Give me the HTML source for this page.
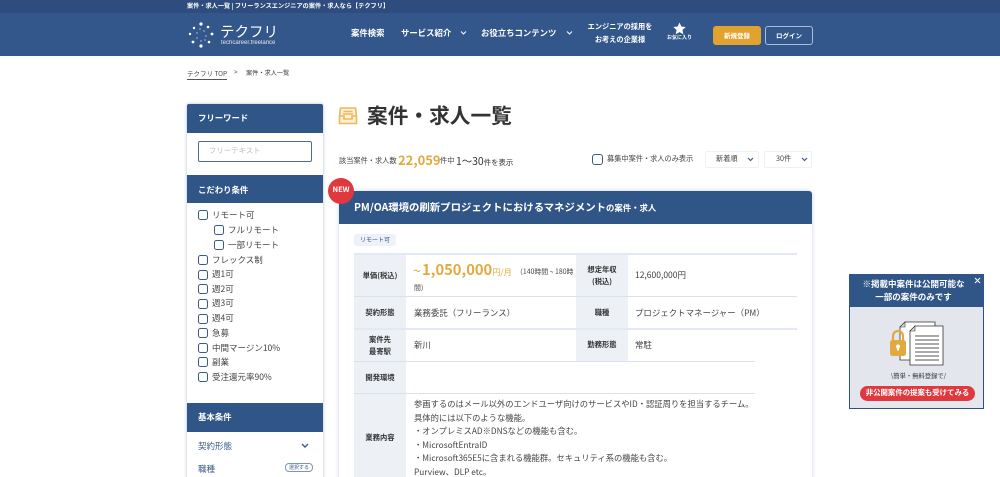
<!DOCTYPE html>
<html lang="ja"><head><meta charset="utf-8"><title>案件・求人一覧</title>
<style>
html,body{margin:0;padding:0;background:#fff;width:1000px;height:477px;overflow:hidden}
#p{width:1000px;height:477px;overflow:hidden;position:relative;font-family:"Liberation Sans","Noto Sans CJK JP",sans-serif;color:#333}
.a{position:absolute;white-space:nowrap;line-height:1}
.jp{font-family:"Noto Sans CJK JP",sans-serif}
.box{position:absolute;box-sizing:border-box}
.w{color:#fff}
.b{font-weight:700}
.cb{position:absolute;box-sizing:border-box;width:10px;height:10px;border:1.3px solid #3a5a8c;border-radius:2.5px;background:#fff}
.sb{font-family:"Noto Sans CJK JP",sans-serif;font-size:8.5px;color:#444;position:absolute;line-height:1;white-space:nowrap}
.lab{position:absolute;font-family:"Noto Sans CJK JP",sans-serif;font-size:7.3px;font-weight:700;color:#333;text-align:center;line-height:12px}
.val{position:absolute;font-family:"Noto Sans CJK JP",sans-serif;font-size:8.45px;color:#444;line-height:1;white-space:nowrap}
</style></head><body><div id="p">
<div class="box" style="left:0;top:0;width:1000px;height:13px;background:#2e4d7e"></div>
<div class="box" style="left:0;top:13px;width:1000px;height:43px;background:#33578b"></div>
<div class="a jp w b" style="left:187px;top:3px;font-size:6.150px;letter-spacing:.03px">案件・求人一覧 | フリーランスエンジニアの案件・求人なら【テクフリ】</div>

<svg class="box" style="left:187px;top:21px" width="30" height="28" viewBox="0 0 30 28" fill="#fff">
<circle cx="14" cy="3" r="1.600"/><circle cx="7" cy="7" r="1.200"/><circle cx="21" cy="6" r="1.300"/><circle cx="3" cy="13" r="1.200"/><circle cx="25" cy="13" r="1.400"/><circle cx="6" cy="21" r="1.400"/><circle cx="22" cy="21" r="1.300"/><circle cx="14" cy="25" r="1.600"/>
<circle cx="13" cy="8" r=".6"/><circle cx="17" cy="10" r=".6"/><circle cx="10" cy="12" r=".6"/><circle cx="19" cy="15" r=".6"/><circle cx="10" cy="17" r=".6"/><circle cx="14" cy="20" r=".6"/><circle cx="18" cy="19" r=".6"/></svg>
<div class="a jp w" style="left:220px;top:25px;font-size:14.500px">テクフリ</div>
<div class="a w" style="left:221px;top:40px;font-size:6px;opacity:.85">techcareer.freelance</div>

<div class="a jp w b" style="left:351px;top:29px;font-size:8.400px">案件検索</div>
<div class="a jp w b" style="left:401px;top:29px;font-size:8.400px">サービス紹介</div>
<svg class="box" style="left:460px;top:30px" width="7" height="6" viewBox="0 0 7 6"><path d="M1 1.500L3.500 4L6 1.500" fill="none" stroke="#fff" stroke-width="1"/></svg>
<div class="a jp w b" style="left:481px;top:29px;font-size:8.400px">お役立ちコンテンツ</div>
<svg class="box" style="left:566px;top:30px" width="7" height="6" viewBox="0 0 7 6"><path d="M1 1.500L3.500 4L6 1.500" fill="none" stroke="#fff" stroke-width="1"/></svg>
<div class="a jp w b" style="left:580px;top:21px;width:80px;text-align:center;font-size:7.200px;line-height:13px;white-space:normal">エンジニアの採用を<br>お考えの企業様</div>
<svg class="box" style="left:673px;top:22px" width="13" height="13" viewBox="0 0 24 24"><path d="M12 1l3.400 7.400 8 .9-6 5.400 1.700 8L12 18.600 4.900 22.700l1.700-8-6-5.400 8-.9z" fill="#fff"/></svg>
<div class="a jp w b" style="left:667px;top:35px;font-size:5px">お気に入り</div>
<div class="a jp w b" style="left:713px;top:26px;width:48px;height:19px;background:#e2a22e;border-radius:3px;text-align:center;line-height:18px;font-size:6.500px">新規登録</div>
<div class="a jp w b" style="left:765px;top:26px;width:48px;height:19px;box-sizing:border-box;border:1px solid #a9bdd8;border-radius:3px;text-align:center;line-height:16px;font-size:6.500px">ログイン</div>

<div class="a jp" style="left:187px;top:70px;font-size:6.500px;color:#444;border-bottom:1px solid #555;padding-bottom:2px">テクフリ TOP</div>
<div class="a" style="left:234px;top:70px;font-size:6px;color:#444">&gt;</div>
<div class="a jp" style="left:246px;top:70px;font-size:6.200px;color:#333">案件・求人一覧</div>

<!-- sidebar -->
<div class="box" style="left:187px;top:104px;width:136px;height:380px;background:#fff;box-shadow:0 0 3px rgba(60,90,140,.4);border-radius:2px 2px 0 0"></div>
<div class="box" style="left:187px;top:104px;width:136px;height:29px;background:#305587;border-radius:2px 2px 0 0"></div>
<div class="a jp w b" style="left:198px;top:114px;font-size:8.400px">フリーワード</div>
<div class="box" style="left:198px;top:141px;width:114px;height:21px;border:1px solid #4f6d9b;border-radius:2px;background:#fff"></div>
<div class="a jp" style="left:209px;top:147px;font-size:7.400px;color:#bbb">フリーテキスト</div>
<div class="box" style="left:187px;top:175px;width:136px;height:28px;background:#305587"></div>
<div class="a jp w b" style="left:198px;top:186px;font-size:8.400px">こだわり条件</div>

<div class="cb" style="left:198px;top:210px"></div><div class="sb" style="left:212px;top:211px">リモート可</div>
<div class="cb" style="left:214px;top:225px"></div><div class="sb" style="left:228px;top:226px">フルリモート</div>
<div class="cb" style="left:214px;top:240px"></div><div class="sb" style="left:228px;top:241px">一部リモート</div>
<div class="cb" style="left:198px;top:255px"></div><div class="sb" style="left:212px;top:256px">フレックス制</div>
<div class="cb" style="left:198px;top:270px"></div><div class="sb" style="left:212px;top:270px">週1可</div>
<div class="cb" style="left:198px;top:284px"></div><div class="sb" style="left:212px;top:285px">週2可</div>
<div class="cb" style="left:198px;top:299px"></div><div class="sb" style="left:212px;top:299px">週3可</div>
<div class="cb" style="left:198px;top:314px"></div><div class="sb" style="left:212px;top:314px">週4可</div>
<div class="cb" style="left:198px;top:328px"></div><div class="sb" style="left:212px;top:329px">急募</div>
<div class="cb" style="left:198px;top:343px"></div><div class="sb" style="left:212px;top:344px">中間マージン10%</div>
<div class="cb" style="left:198px;top:357px"></div><div class="sb" style="left:212px;top:358px">副業</div>
<div class="cb" style="left:198px;top:372px"></div><div class="sb" style="left:212px;top:373px">受注還元率90%</div>

<div class="box" style="left:187px;top:403px;width:136px;height:29px;background:#305587"></div>
<div class="a jp w b" style="left:198px;top:413px;font-size:8.400px">基本条件</div>
<div class="a jp" style="left:198px;top:442px;font-size:8.500px;color:#3a5a8c">契約形態</div>
<svg class="box" style="left:301px;top:443px" width="8" height="6" viewBox="0 0 8 6"><path d="M1 1l3 3 3-3" fill="none" stroke="#3a5a8c" stroke-width="1.400"/></svg>
<div class="a jp" style="left:198px;top:465px;font-size:8.500px;color:#3a5a8c">職種</div>
<div class="a jp" style="left:285px;top:463px;width:28px;height:9px;box-sizing:border-box;border:1px solid #7f95b8;border-radius:4px;font-size:5px;line-height:7px;text-align:center;color:#3a5a8c">選択する</div>

<!-- main heading -->
<svg class="box" style="left:338px;top:106px" width="20" height="20" viewBox="0 0 20 20" fill="none" stroke="#edb85c" stroke-width="1.600"><path d="M2.500 2h15l1 8v7.500h-17V10z" fill="#fdf0d6"/><path d="M1.500 10H6v3h8v-3h4.500"/><path d="M5.500 5.500h9M5 8h10"/></svg>
<div class="a jp b" style="left:367px;top:101px;font-size:20.700px;color:#333;line-height:26px">案件・求人一覧</div>
<div class="a jp" style="left:339px;top:158px;font-size:7.200px;color:#444">該当案件・求人数</div>
<div class="a jp b" style="left:398px;top:153px;font-size:13px;color:#e2a93f">22,059</div>
<div class="a jp" style="left:440px;top:158px;font-size:7.200px;color:#444">件中</div>
<div class="a jp" style="left:456px;top:156px;font-size:10.400px;color:#333">1〜30<span style="font-size:7.400px">件を表示</span></div>

<div class="box" style="left:592px;top:154px;width:11px;height:11px;border:1.300px solid #3a5a8c;border-radius:3px"></div>
<div class="a jp" style="left:607px;top:156px;font-size:7.200px;color:#444">募集中案件・求人のみ表示</div>
<div class="box" style="left:705px;top:151px;width:54px;height:17px;border:1px solid #eef1f5;border-radius:2px;background:#fff"></div>
<div class="a jp" style="left:716px;top:156px;font-size:7.200px;color:#444">新着順</div>
<svg class="box" style="left:747px;top:157px" width="7" height="5" viewBox="0 0 7 5"><path d="M1 1l2.500 2.500L6 1" fill="none" stroke="#3a5a8c" stroke-width="1.200"/></svg>
<div class="box" style="left:764px;top:151px;width:48px;height:17px;border:1px solid #eef1f5;border-radius:2px;background:#fff"></div>
<div class="a jp" style="left:776px;top:156px;font-size:7.200px;color:#444">30件</div>
<svg class="box" style="left:801px;top:157px" width="7" height="5" viewBox="0 0 7 5"><path d="M1 1l2.500 2.500L6 1" fill="none" stroke="#3a5a8c" stroke-width="1.200"/></svg>

<!-- card -->
<div class="box" style="left:339px;top:191px;width:473px;height:300px;background:#fff;box-shadow:0 0 4px rgba(90,130,190,.35);border-radius:3px 3px 0 0"></div>
<div class="box" style="left:339px;top:191px;width:473px;height:33px;background:#305587;border-radius:3px 3px 0 0"></div>
<div class="a jp w b" style="left:354px;top:202px;font-size:10.400px">PM/OA環境の刷新プロジェクトにおけるマネジメント<span style="font-size:8.400px">の案件・求人</span></div>
<div class="box" style="left:328px;top:178px;width:26px;height:26px;border-radius:50%;background:#e0383f"></div>
<div class="a jp w b" style="left:328px;top:186px;width:26px;text-align:center;font-size:7.500px">NEW</div>

<div class="a jp" style="left:354px;top:234px;width:42px;height:12px;background:#edf1f8;border-radius:3px;font-size:6px;line-height:12px;text-align:center;color:#3a5a8c">リモート可</div>

<!-- table -->
<div class="box" style="left:354px;top:254px;width:52px;height:223px;background:#edf1f6"></div>
<div class="box" style="left:576px;top:254px;width:52px;height:107px;background:#edf1f6"></div>
<div class="box" style="left:354px;top:253px;width:443px;height:2px;background:#e3e9f2"></div>
<div class="box" style="left:354px;top:296px;width:443px;height:1px;background:#d8e1ee"></div>
<div class="box" style="left:354px;top:328px;width:443px;height:2px;background:#e3e9f2"></div>
<div class="box" style="left:354px;top:361px;width:401px;height:1px;background:#d8e1ee"></div>
<div class="box" style="left:354px;top:393px;width:401px;height:1px;background:#d8e1ee"></div>

<div class="lab" style="left:354px;top:270px;width:52px">単価(税込)</div>
<div class="a jp" style="left:413px;top:264px;font-size:14px;color:#e2a93f">~</div>
<div class="a jp b" style="left:422px;top:261px;font-size:14.700px;color:#e2a93f;line-height:18px">1,050,000<span style="font-size:8.200px;font-weight:400">円/月</span></div>
<div class="a jp" style="left:516px;top:268px;font-size:6.900px;color:#444">（140時間 ~ 180時</div>
<div class="a jp" style="left:414px;top:284px;font-size:6.900px;color:#444">間）</div>
<div class="lab" style="left:576px;top:264px;width:52px">想定年収<br>(税込)</div>
<div class="val" style="left:635px;top:271px;font-size:8.500px">12,600,000円</div>

<div class="lab" style="left:354px;top:307px;width:52px">契約形態</div>
<div class="val" style="left:414px;top:309px">業務委託（フリーランス）</div>
<div class="lab" style="left:576px;top:307px;width:52px">職種</div>
<div class="val" style="left:635px;top:309px">プロジェクトマネージャー（PM）</div>

<div class="lab" style="left:354px;top:334px;width:52px">案件先<br>最寄駅</div>
<div class="val" style="left:414px;top:341px">新川</div>
<div class="lab" style="left:576px;top:339px;width:52px">勤務形態</div>
<div class="val" style="left:635px;top:341px">常駐</div>

<div class="lab" style="left:354px;top:372px;width:52px">開発環境</div>
<div class="lab" style="left:354px;top:432px;width:52px">業務内容</div>
<div class="val" style="left:414px;top:398px;font-size:8.300px;line-height:13.500px">参画するのはメール以外のエンドユーザ向けのサービスやID・認証周りを担当するチーム。<br>具体的には以下のような機能。<br>・オンプレミスAD※DNSなどの機能も含む。<br>・MicrosoftEntraID<br>・Microsoft365E5に含まれる機能群。セキュリティ系の機能も含む。<br>Purview、DLP etc。</div>

<!-- popup -->
<div class="box" style="left:849px;top:274px;width:135px;height:135px;background:#e3e6ec;border:1px solid #2f5082"></div>
<div class="box" style="left:849px;top:274px;width:135px;height:33px;background:#305587"></div>
<div class="a jp w b" style="left:846px;top:278px;width:135px;text-align:center;font-size:8.500px;line-height:13px">※掲載中案件は公開可能な<br>一部の案件のみです</div>
<svg class="box" style="left:974px;top:277px" width="7" height="7" viewBox="0 0 7 7"><path d="M1 1l5 5M6 1L1 6" stroke="#fff" stroke-width="1"/></svg>
<svg class="box" style="left:888px;top:319px" width="60" height="50" viewBox="0 0 60 50">
<path d="M17 3h30v38H12V8z" fill="#fff" stroke="#333" stroke-width=".8"/><path d="M12 8l5-5v5z" fill="#ddd" stroke="#333" stroke-width=".6"/>
<path d="M27 7h28v39H22V12z" fill="#fff" stroke="#333" stroke-width=".8"/><path d="M22 12l5-5v5z" fill="#ddd" stroke="#333" stroke-width=".6"/>
<path d="M27 17h24M27 21h24M27 25h24M27 29h24M27 33h24M27 37h24M27 41h24" stroke="#555" stroke-width="1"/>
<path d="M5 22v-5a5 5 0 0 1 10 0v5" fill="none" stroke="#e2a93f" stroke-width="2.200"/>
<rect x="2" y="21" width="16" height="16" rx="2.500" fill="#e2a93f"/><circle cx="10" cy="27.500" r="2" fill="#fff"/><path d="M9 27.500h2v4H9z" fill="#fff"/></svg>
<div class="a jp" style="left:851px;top:373px;width:135px;text-align:center;font-size:6.300px;color:#333">\簡単・無料登録で/</div>
<div class="a jp w b" style="left:860px;top:386px;width:115px;height:15px;background:#e0383f;border-radius:8px;text-align:center;font-size:7.400px;line-height:14px">非公開案件の提案も受けてみる</div>
</div></body></html>
